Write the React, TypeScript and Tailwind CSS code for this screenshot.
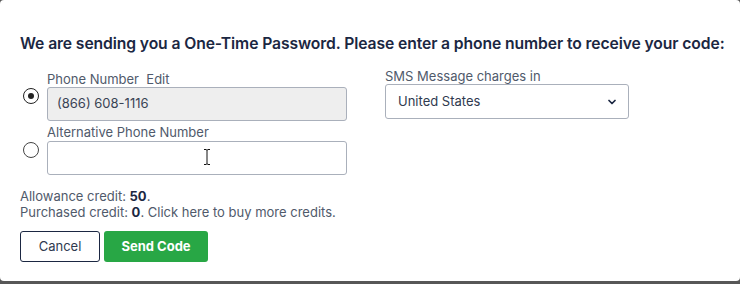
import React from 'react';
import { ChevronDown } from 'lucide-react';

function Radio({ checked }: { checked?: boolean }) {
  return (
    <div className="ml-[3px] w-[24px] shrink-0">
      <div
        className={
          checked
            ? 'w-[16px] h-[16px] rounded-full border-[1.5px] border-[#222] flex items-center justify-center'
            : 'w-[16px] h-[16px] rounded-full border border-[#444]'
        }
      >
        {checked && <div className="w-[6px] h-[6px] rounded-full bg-[#222]" />}
      </div>
    </div>
  );
}

export default function App() {
  return (
    <div className="w-[740px] h-[284px] bg-[#575757] font-['Inter',sans-serif]">
      <div className="bg-white h-[281px] rounded-[4px] px-5 pt-[34px]">
        <h2 className="text-[15.7px] leading-[20px] font-semibold text-[#1b2742] tracking-[-0.1px] whitespace-nowrap">
          We are sending you a One-Time Password. Please enter a phone number to receive your code:
        </h2>

        <div className="flex gap-[38px] mt-[14px]">
          {/* left column */}
          <div className="flex flex-col gap-[3px] pt-[3px]">
            <div className="flex items-center">
              <Radio checked />
              <div className="w-[300px]">
                <label className="block text-[13px] leading-[16px] text-[#505a6b] whitespace-pre">Phone Number  Edit</label>
                <div className="h-[34px] bg-[#eeeeee] border border-[#aab0bb] rounded-[3px] flex items-center px-[9px] text-[13px] text-[#3a4354]">
                  (866) 608-1116
                </div>
              </div>
            </div>
            <div className="flex items-center">
              <Radio />
              <div className="w-[300px]">
                <label className="block text-[13px] leading-[16px] text-[#505a6b] mb-[1px]">Alternative Phone Number</label>
                <div className="relative h-[34px] bg-white border border-[#aab0bb] rounded-[3px]">
                  <svg className="absolute left-[155px] top-[7px]" width="8" height="16" viewBox="0 0 8 16">
                    <path d="M1 0.5h2.2M4.8 0.5H7M4 1.5v13M1 15.5h2.2M4.8 15.5H7M3 1h2M3 15h2" stroke="#111" strokeWidth="1" fill="none" />
                  </svg>
                </div>
              </div>
            </div>
          </div>

          {/* right column */}
          <div className="w-[244px]">
            <label className="block text-[13px] leading-[16px] text-[#505a6b]">SMS Message charges in</label>
            <div className="h-[35px] border border-[#aab0bb] rounded-[3px] flex items-center justify-between pl-[12px] pr-[10px] text-[13px] text-[#2f3a4f]">
              <span>United States</span>
              <ChevronDown className="w-[12px] h-[12px] text-[#1b2742]" strokeWidth={3.5} />
            </div>
          </div>
        </div>

        <div className="mt-[13px] text-[13px] leading-[16px] text-[#505a6b]">
          <p>
            Allowance credit: <span className="font-bold text-[#1b2742]">50</span>.
          </p>
          <p>
            Purchased credit: <span className="font-bold text-[#1b2742]">0</span>. Click here to buy more credits.
          </p>
        </div>

        <div className="flex gap-[4px] mt-[11px]">
          <button className="w-[80px] h-[31px] border border-[#1b2742] rounded-[3px] text-[13px] text-[#2f3a4f] bg-white">
            Cancel
          </button>
          <button className="w-[104px] h-[31px] rounded-[3px] bg-[#28a745] text-white text-[13px] font-bold">
            Send Code
          </button>
        </div>
      </div>
    </div>
  );
}
